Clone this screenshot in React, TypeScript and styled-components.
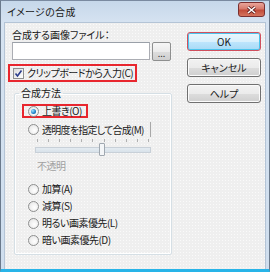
import React from "react";
import styled, { createGlobalStyle } from "styled-components";

const Global = createGlobalStyle`
  html, body { margin: 0; padding: 0; background: #ffffff; }
  body {
    font-family: "Noto Sans CJK JP", "Noto Sans", sans-serif;
    font-feature-settings: "palt";
  }
`;

const Window = styled.div`
  width: 270px;
  height: 272px;
  box-sizing: border-box;
  display: flex;
  flex-direction: column;
  background: linear-gradient(180deg, #c6d8ea 0px, #d6e3f1 22px, #cfdeee 100%);
  border-left: 1px solid #6b7a8c;
  border-top: 1px solid #7a8aa0;
  border-right: 1px solid #6b7a8c;
  border-bottom: 3px solid #28b4e8;
  padding: 0 3px;
`;

const TitleBar = styled.div`
  height: 21px;
  display: flex;
  align-items: center;
  justify-content: space-between;
  padding: 0 0 0 3px;
`;

const Title = styled.span`
  font-size: 10px;
  color: #1a1a1a;
  letter-spacing: 0.3px;
`;

const CloseButton = styled.div`
  width: 25px;
  height: 13px;
  margin-right: 1px;
  margin-top: -4px;
  border: 1px solid #7a3030;
  border-radius: 3px;
  background: linear-gradient(180deg, #e9a59a 0%, #d77a6c 45%, #c14c3a 55%, #d4745e 100%);
  display: flex;
  align-items: center;
  justify-content: center;
`;

const Body = styled.div`
  flex: 1;
  display: flex;
  background-color: #efefef;
  background-image: radial-gradient(circle, #fafafa 0.7px, transparent 0.8px);
  background-size: 3px 3px;
  border: 1px solid #b4c4d6;
  border-bottom: none;
`;

const LeftCol = styled.div`
  width: 176px;
  display: flex;
  flex-direction: column;
  padding: 0 0 0 3px;
`;

const Label = styled.div`
  font-size: 10px;
  color: #1a1a1a;
  margin: 4px 0 0 4px;
  height: 15px;
  line-height: 15px;
`;

const FileRow = styled.div`
  display: flex;
  align-items: flex-start;
  gap: 2px;
  margin: 0 0 0 4px;
`;

const TextInput = styled.div`
  width: 136px;
  height: 16px;
  background: #ffffff;
  border: 1px solid #abadb3;
  border-top-color: #9aa0a8;
`;

const BrowseButton = styled.div`
  width: 17px;
  height: 17px;
  border: 1px solid #8e8f8f;
  border-radius: 2px;
  background: linear-gradient(180deg, #f6f6f6 0%, #ebebeb 50%, #dddddd 51%, #cfcfcf 100%);
  font-size: 9px;
  color: #333;
  display: flex;
  align-items: flex-end;
  justify-content: center;
  line-height: 12px;
`;

const Highlight = styled.div<{ $w: number }>`
  width: ${(p) => p.$w}px;
  box-sizing: border-box;
  border: 2px solid #e8262e;
  display: flex;
  align-items: center;
`;

const CheckRow = styled(Highlight)`
  height: 18px;
  margin-top: 3px;
  padding-left: 3px;
  gap: 3px;
`;

const CheckBox = styled.div`
  width: 11px;
  height: 11px;
  box-sizing: border-box;
  border: 1px solid #8e8f8f;
  background: linear-gradient(135deg, #dcdcdc, #ffffff);
  display: flex;
  align-items: center;
  justify-content: center;
  flex: none;
`;

const Text = styled.span<{ $disabled?: boolean; $tight?: boolean }>`
  font-size: 10px;
  line-height: 14px;
  letter-spacing: ${(p) => (p.$tight ? "-0.75px" : "-0.5px")};
  color: ${(p) => (p.$disabled ? "#a0a0a0" : "#1a1a1a")};
  white-space: nowrap;
`;

const Group = styled.fieldset`
  margin: 5px 0 0 6px;
  width: 158px;
  height: 168px;
  box-sizing: border-box;
  border: 1px solid #d5dfe5;
  box-shadow: inset 0 0 0 1px #ffffff;
  border-radius: 2px;
  padding: 5px 0 0 7px;
  display: flex;
  flex-direction: column;
`;

const Legend = styled.legend`
  font-size: 10px;
  line-height: 12px;
  color: #1a1a1a;
  padding: 0 2px;
  margin-left: -3px;
`;

const HighlightRadio = styled(Highlight)`
  height: 14px;
  padding-left: 4px;
  gap: 3px;
`;

const RadioRow = styled.div<{ $top?: number }>`
  display: flex;
  align-items: center;
  gap: 3px;
  height: 14px;
  padding-left: 6px;
  margin-top: ${(p) => p.$top ?? 0}px;
`;

const Radio = styled.div`
  width: 9px;
  height: 9px;
  border-radius: 50%;
  border: 1px solid #8e8f8f;
  background: radial-gradient(circle at 60% 60%, #ffffff 0%, #e2e2e2 100%);
  display: flex;
  align-items: center;
  justify-content: center;
  flex: none;
`;

const RadioDot = styled.div`
  width: 5px;
  height: 5px;
  border-radius: 50%;
  background: radial-gradient(circle at 35% 35%, #9fe2ff 0%, #1a7ec8 60%, #0d4f8c 100%);
`;

const ClipRow = styled(RadioRow)`
  height: 15px;
  width: 129px;
  box-sizing: border-box;
  overflow: hidden;
  border-right: 1px solid #a8a8a8;
`;

const Slider = styled.div`
  margin: 2px 0 0 13px;
  width: 116px;
  display: flex;
  flex-direction: column;
  gap: 5px;
`;

const Ticks = styled.div`
  display: flex;
  justify-content: space-between;
  padding: 0 2px;
  height: 3px;
`;

const Tick = styled.div`
  width: 1px;
  height: 3px;
  background: #b0b0b0;
`;

const Track = styled.div`
  height: 4px;
  border: 1px solid #c8d0d8;
  background: linear-gradient(180deg, #e4ebf1, #d8e2ea);
  position: relative;
`;

const Thumb = styled.div`
  position: absolute;
  left: 63px;
  top: -5px;
  width: 4px;
  height: 11px;
  border: 1px solid #a0a8b0;
  background: #f4f6f8;
  border-radius: 1px;
`;

const Caption = styled.div`
  margin: 6px 0 0 15px;
  height: 14px;
  display: flex;
  align-items: center;
`;

const RightCol = styled.div`
  display: flex;
  flex-direction: column;
  gap: 7px;
  padding: 9px 0 0 3px;
`;

const Button = styled.div<{ $default?: boolean }>`
  width: 72px;
  height: 17px;
  border: 1px solid ${(p) => (p.$default ? "#d0505e" : "#707070")};
  border-radius: 3px;
  box-shadow: ${(p) => (p.$default ? "inset 0 0 0 1px #4cc4ec" : "inset 0 0 0 1px #fbfbfb")};
  background: ${(p) =>
    p.$default
      ? "linear-gradient(180deg, #eaf6fd 0%, #d9f0fc 50%, #bee6fd 51%, #a7d9f5 100%)"
      : "linear-gradient(180deg, #f2f2f2 0%, #ebebeb 50%, #dddddd 51%, #cfcfcf 100%)"};
  display: flex;
  align-items: center;
  justify-content: center;
  font-size: 10px;
  color: #1a1a1a;
`;

const App: React.FC = () => (
  <>
    <Global />
    <Window>
      <TitleBar>
        <Title>イメージの合成</Title>
        <CloseButton>
          <svg width="9" height="8" viewBox="0 0 9 8">
            <path d="M1 1 L8 7 M8 1 L1 7" stroke="#5a1a1a" strokeWidth="3" />
            <path d="M1 1 L8 7 M8 1 L1 7" stroke="#ffffff" strokeWidth="1.6" />
          </svg>
        </CloseButton>
      </TitleBar>
      <Body>
        <LeftCol>
          <Label>合成する画像ファイル：</Label>
          <FileRow>
            <TextInput />
            <BrowseButton>...</BrowseButton>
          </FileRow>
          <CheckRow $w={129}>
            <CheckBox>
              <svg width="9" height="9" viewBox="0 0 9 9">
                <path d="M1.5 4.5 L3.5 7 L7.5 1.5" stroke="#2a3c8c" strokeWidth="1.6" fill="none" />
              </svg>
            </CheckBox>
            <Text>クリップボードから入力(C)</Text>
          </CheckRow>
          <Group>
            <Legend>合成方法</Legend>
            <HighlightRadio $w={66}>
              <Radio>
                <RadioDot />
              </Radio>
              <Text>上書き(O)</Text>
            </HighlightRadio>
            <ClipRow $top={4}>
              <Radio />
              <Text $tight>透明度を指定して合成(M)</Text>
            </ClipRow>
            <Slider>
              <Ticks>
                {Array.from({ length: 11 }).map((_, i) => (
                  <Tick key={i} />
                ))}
              </Ticks>
              <Track>
                <Thumb />
              </Track>
            </Slider>
            <Caption>
              <Text $disabled>不透明</Text>
            </Caption>
            <RadioRow $top={9}>
              <Radio />
              <Text>加算(A)</Text>
            </RadioRow>
            <RadioRow $top={3}>
              <Radio />
              <Text>減算(S)</Text>
            </RadioRow>
            <RadioRow $top={3}>
              <Radio />
              <Text>明るい画素優先(L)</Text>
            </RadioRow>
            <RadioRow $top={3}>
              <Radio />
              <Text>暗い画素優先(D)</Text>
            </RadioRow>
          </Group>
        </LeftCol>
        <RightCol>
          <Button $default>OK</Button>
          <Button>キャンセル</Button>
          <Button>ヘルプ</Button>
        </RightCol>
      </Body>
    </Window>
  </>
);

export default App;
